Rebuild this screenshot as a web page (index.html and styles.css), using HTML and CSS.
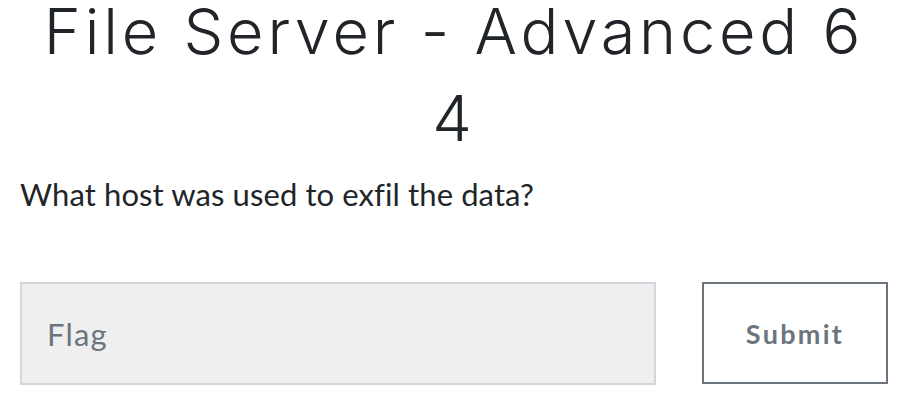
FILE: index.html
```html
<!DOCTYPE html>
<html lang="en">
<head>
<meta charset="utf-8">
<title>File Server - Advanced 64</title>
<link rel="stylesheet" href="styles.css">
</head>
<body>
<main class="challenge">
  <h2 class="challenge-name">File Server - Advanced 64</h2>
  <p class="challenge-desc">What host was used to exfil the data?</p>
  <form class="submit-row" onsubmit="return false">
    <input class="flag-input" type="text" placeholder="Flag">
    <button class="submit-btn" type="submit">Submit</button>
  </form>
</main>
</body>
</html>
```

FILE: styles.css
```css
html, body {
  margin: 0;
  padding: 0;
  background: #ffffff;
}

.challenge {
  padding: 0 18px 0 20px;
  color: #212529;
}

.challenge-name {
  margin: -12px 0 0;
  padding: 0 22px;
  font-family: "Inter", "Open Sans", sans-serif;
  font-weight: 300;
  font-size: 63px;
  line-height: 87px;
  letter-spacing: 3.8px;
  text-align: center;
  word-break: break-all;
  color: #212529;
}

.challenge-desc {
  margin: 12px 0 0;
  font-family: "Lato", sans-serif;
  font-size: 31px;
  line-height: 40px;
  letter-spacing: 0.1px;
  color: #212529;
}

.submit-row {
  display: flex;
  gap: 46px;
  margin-top: 68px;
}

.flag-input {
  flex: 1;
  box-sizing: border-box;
  height: 103px;
  margin: 0;
  padding: 0 25px;
  border: 2px solid #d2d6dd;
  border-radius: 0;
  background: #efefef;
  font-family: "Lato", sans-serif;
  font-size: 31px;
  letter-spacing: 1.2px;
  color: #495057;
  outline: none;
}

.flag-input::placeholder {
  color: #6c757d;
  opacity: 1;
}

.submit-btn {
  box-sizing: border-box;
  width: 186px;
  height: 102px;
  margin: 0;
  padding: 0;
  border: 2px solid #6c757d;
  border-radius: 0;
  background: #ffffff;
  font-family: "Lato", sans-serif;
  font-weight: 700;
  font-size: 27px;
  letter-spacing: 2.3px;
  color: #6c757d;
}
```
